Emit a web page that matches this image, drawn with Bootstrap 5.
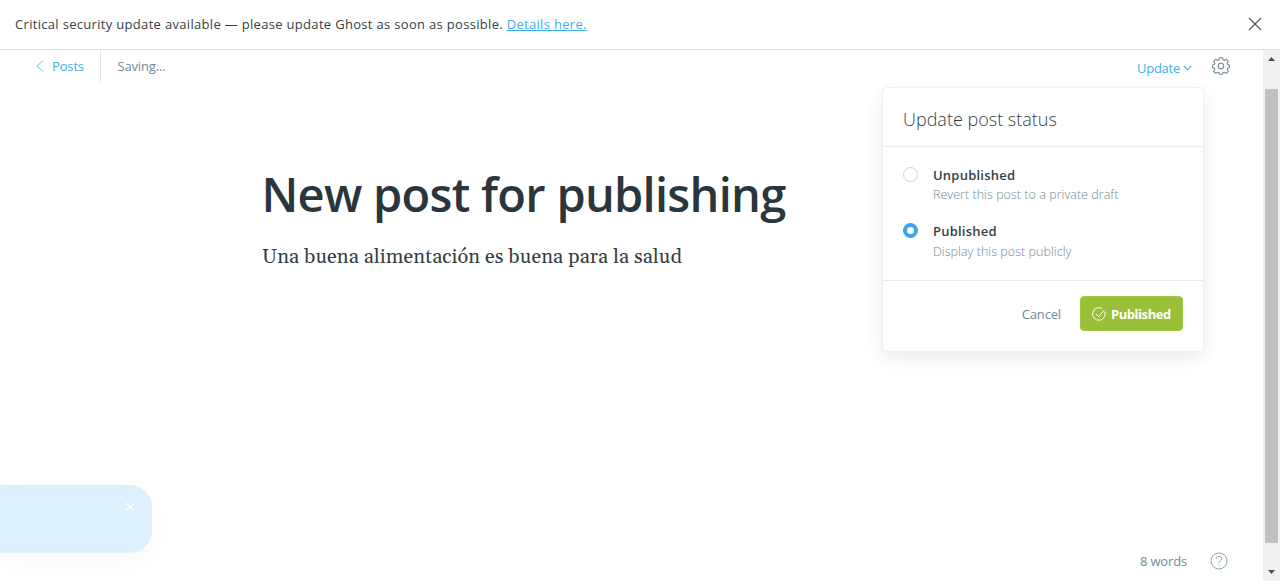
<!DOCTYPE html>
<html lang="en">
<head>
<meta charset="utf-8">
<meta name="viewport" content="width=device-width, initial-scale=1">
<title>New post for publishing</title>
<link href="https://cdn.jsdelivr.net/npm/bootstrap@5.3.0/dist/css/bootstrap.min.css" rel="stylesheet">
<style>
  body { font-family: "Open Sans", "Noto Sans", sans-serif; font-size: 13px; line-height: 20px; color: #343f44; }
  .alert-bar { height: 50px; border-bottom: 1px solid #dcdfe0; padding: 0 18px 2px 15px; letter-spacing: .315px; }
  .blue { color: #3eb0ef; }
  .muted { color: #738a94; }
  .tight { letter-spacing: -.15px; }
  .editor-head { height: 33px; padding: 0 33px 1px 36px; }
  .divider { width: 1px; height: 33px; margin: 1px 16.5px 0 16px; background: #dfe9f0; }
  .update-link { padding-top: 3px; letter-spacing: -.25px; }
  .post { margin: 81px 0 0 262px; }
  .post h1 { font-size: 47px; line-height: 60px; font-weight: 600; letter-spacing: -.72px; color: #2b363c; margin: 0 0 0 -.5px; white-space: nowrap; }
  .post p { font-family: Gelasio, "Noto Serif", "Liberation Serif", serif; font-size: 20px; letter-spacing: .09px; line-height: 30px; margin: 18px 0 0; white-space: nowrap; }
  .status-menu { top: 37px; left: 882px; width: 322px; height: 265px; background: #fff; border: 1px solid #edf1f3; border-radius: 5px; box-shadow: 0 6px 18px rgba(39,44,49,.09); }
  .menu-title { height: 59px; padding: 4px 20px 0; border-bottom: 1px solid #e3eef5; font-size: 18px; font-weight: 300; }
  .menu-body { height: 134px; padding: 18px 20px 0; border-bottom: 1px solid #e3eaee; }
  .choice { height: 56px; gap: 15px; }
  .dot { width: 15px; height: 15px; margin-top: 2px; border: 1px solid #c0d3e0; border-radius: 50%; flex: none; }
  .dot.on { border: 4px solid #3ba7e8; }
  .choice strong { font-weight: 600; letter-spacing: .22px; }
  .choice small { display: block; font-size: 12.5px; font-weight: 300; letter-spacing: .04px; color: #738a94; }
  .choice + .choice small { margin-top: 1px; }
  .menu-foot { padding: 15px 20px 0; gap: 19px; }
  .btn-done { width: 103px; height: 35px; padding: 0 11px; gap: 5px; background: #9abf38; color: #fff; border: 1px solid #a3c843; border-radius: 4px; font-size: 13px; font-weight: 700; letter-spacing: -.45px; line-height: 20px; }
  .toast-box { left: 0; bottom: 28px; width: 152px; height: 68px; background: #ddf1fd; border-radius: 0 22px 22px 0; box-shadow: 0 8px 26px rgba(39,44,49,.03); }
  .toast-box svg { position: absolute; left: 125px; top: 17px; }
  .word-count { padding: 0 35px 10px 0; gap: 23px; }
  .scroller { width: 17px; background: #f1f1f1; padding: 7px 0; }
  .thumb { width: 13px; height: 454px; margin-top: 1px; background: #c1c1c1; }
  .arrow { fill: #505050; }
  .gear { margin-left: 20px; }
  svg { display: block; fill: none; flex: none; }
</style>
</head>
<body class="vh-100 overflow-hidden d-flex flex-column bg-white">
<div class="alert-bar d-flex align-items-center justify-content-between flex-shrink-0">
  <div>Critical security update available — please update Ghost as soon as possible. <a class="blue" href="#">Details here.</a></div>
  <svg width="14" height="14" stroke="#4a5357" stroke-width="1.1"><path d="M1 1l12 12M13 1L1 13"/></svg>
</div>
<div class="d-flex flex-grow-1">
  <main class="position-relative flex-grow-1 d-flex flex-column">
    <header class="editor-head d-flex align-items-center justify-content-between">
      <div class="d-flex align-items-center tight">
        <svg width="8" height="12" stroke="#6fc4f3"><path d="M7.3.5L.8 6l6.500 5.500"/></svg>
        <span class="blue ms-2">Posts</span>
        <span class="divider"></span>
        <span class="muted">Saving...</span>
      </div>
      <div class="d-flex align-items-center">
        <span class="blue update-link">Update</span>
        <svg class="mt-1" style="margin-left:3px" width="9" height="6" stroke="#5a9dc4" stroke-width="1.100"><path d="M.7.8l3.800 4L8.300.8"/></svg>
        <svg class="gear" width="18" height="18" stroke="#738a94" stroke-width="1.1" stroke-linejoin="round"><circle cx="9" cy="9" r="2.800"/><path d="M7.500.7h3l.5 2.100 1.300.6 2-1.200 2.100 2.100-1.200 2 .6 1.200 1.600.500v2.500l-1.700.6-.5 1.200 1.200 2-2.100 2.100-2-1.200-1.300.6-.5 1.500h-3L7 15.800l-1.300-.6-2 1.200-2.100-2.100 1.200-2-.5-1.200-1.700-.6V8l1.700-.5.5-1.200-1.200-2 2.100-2.100 2 1.200L7 2.800z"/></svg>
      </div>
    </header>
    <article class="post">
      <h1>New post for publishing</h1>
      <p>Una buena alimentación es buena para la salud</p>
    </article>
    <footer class="word-count mt-auto d-flex justify-content-end align-items-center">
      <span class="muted tight">8 words</span>
      <svg width="18" height="18" stroke="#8fa3ac"><circle cx="9" cy="9" r="8"/><path d="M6.200 7c0-3.600 5.600-3.500 5.600-.2 0 2-2.800 1.800-2.800 3.900M9 12.400v1.200"/></svg>
    </footer>
    <section class="status-menu position-absolute">
      <div class="menu-title d-flex align-items-center">Update post status</div>
      <div class="menu-body">
        <div class="choice d-flex"><span class="dot"></span><div><strong>Unpublished</strong><small>Revert this post to a private draft</small></div></div>
        <div class="choice d-flex"><span class="dot on"></span><div><strong>Published</strong><small>Display this post publicly</small></div></div>
      </div>
      <div class="menu-foot d-flex justify-content-end align-items-center">
        <span class="muted tight">Cancel</span>
        <button class="btn btn-done d-flex align-items-center"><svg width="14" height="14" stroke="#fff"><path d="M12.800 4.800A6.300 6.300 0 1 1 10 1.500M4 7l2.700 2.700L12.500 3"/></svg><span>Published</span></button>
      </div>
    </section>
    <div class="toast-box position-absolute"><svg width="10" height="10" stroke="#fff" stroke-width="1.300"><path d="M1 1l8 8M9 1L1 9"/></svg></div>
  </main>
  <div class="scroller d-flex flex-column align-items-center justify-content-between">
    <svg class="arrow" width="7" height="4"><path d="M0 4L3.500 0 7 4z"/></svg>
    <div class="thumb"></div>
    <svg class="arrow" width="7" height="4"><path d="M0 0l3.500 4L7 0z"/></svg>
  </div>
</div>
<script src="https://cdn.jsdelivr.net/npm/bootstrap@5.3.0/dist/js/bootstrap.bundle.min.js"></script>
</body>
</html>
